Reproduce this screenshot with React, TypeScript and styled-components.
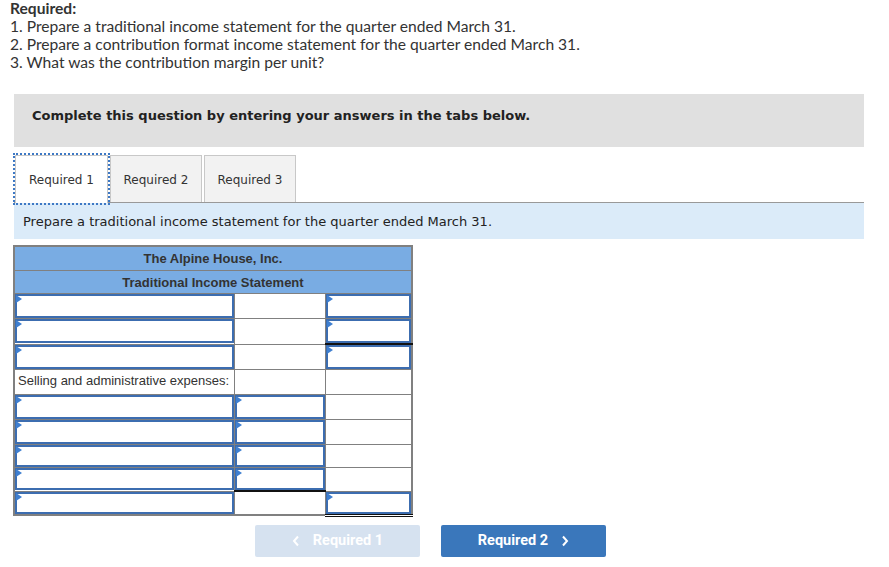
import { createGlobalStyle, styled, css } from "styled-components";

const GlobalStyle = createGlobalStyle`
  body {
    margin: 0;
    background: #fff;
    color: #333;
  }
`;

const Page = styled.div`
  padding: 0 25px 0 10px;
  width: 889px;
  box-sizing: border-box;
`;

const Question = styled.div`
  margin-top: -1px;
  font-family: "Lato", "Liberation Sans", sans-serif;
  font-size: 15.6px;
  line-height: 18px;
  color: #333;
`;

const Title = styled.div`
  font-weight: 700;
`;

const Banner = styled.div`
  margin: 23px 0 0 4px;
  height: 53px;
  box-sizing: border-box;
  background: #e0e0e0;
  padding: 14px 0 0 18px;
  font-family: "DejaVu Sans", Verdana, sans-serif;
  font-size: 13px;
  line-height: 16px;
  font-weight: 700;
  color: #222;
`;

const TabBar = styled.div`
  margin: 7px 0 0 4px;
  display: flex;
  align-items: flex-end;
  gap: 2px;
  border-bottom: 1px solid #999;
  height: 48px;
`;

const Tab = styled.div<{ $active?: boolean }>`
  height: 47px;
  width: 92px;
  box-sizing: border-box;
  display: flex;
  align-items: center;
  justify-content: center;
  padding-top: 1px;
  font-family: "DejaVu Sans", Verdana, sans-serif;
  font-size: 12px;
  color: #333;
  border: 1px solid #c8c8c8;
  border-bottom: none;
  background: #f2f2f2;
  ${(p) =>
    p.$active &&
    css`
      background: #fff;
      height: 48px;
      width: 93px;
      margin-bottom: -1px;
      margin-left: 1px;
      padding-top: 0;
      outline: 2px dotted #3d78c4;
      outline-offset: 0;
    `}
`;

const Instruction = styled.div`
  margin-left: 4px;
  height: 36px;
  background: #dbebf9;
  display: flex;
  align-items: center;
  padding-left: 9px;
  font-family: "DejaVu Sans", Verdana, sans-serif;
  font-size: 13px;
  color: #222;
`;

const Table = styled.table`
  margin: 6px 0 0 3px;
  border-collapse: collapse;
  width: 400px;
  font-family: "Liberation Sans", Arial, sans-serif;
  font-size: 13px;
  color: #333;
  border: 2px solid #808080;
`;

const HeadCell = styled.th<{ $h: number }>`
  background: #79ace3;
  border: 1px solid #808080;
  height: ${(p) => p.$h}px;
  padding: 0;
  font-weight: 700;
  font-size: 13px;
  color: #333;
  text-align: center;
`;

const Cell = styled.td<{ $w?: number; $under?: "single" | "double" }>`
  border: 1px solid #808080;
  padding: 0;
  width: ${(p) => (p.$w ? `${p.$w}px` : "auto")};
  vertical-align: top;
  ${(p) =>
    p.$under === "single" &&
    css`
      border-bottom: 2px solid #111;
    `}
  ${(p) =>
    p.$under === "double" &&
    css`
      border-bottom: 3px double #111;
    `}
`;

const Label = styled.div<{ $h: number }>`
  height: ${(p) => p.$h}px;
  padding: 3px 3px 0;
  box-sizing: border-box;
  white-space: nowrap;
`;

const Blank = styled.div<{ $h: number }>`
  height: ${(p) => p.$h}px;
`;

const Entry = styled.div<{ $h: number }>`
  position: relative;
  height: ${(p) => p.$h}px;
  box-sizing: border-box;
  border: 2px solid #3c6db0;
  background: #fff;
  &::before {
    content: "";
    position: absolute;
    left: -1px;
    top: -1px;
    border-left: 6px solid #3f7fd0;
    border-top: 4px solid transparent;
    border-bottom: 4px solid transparent;
  }
`;

const Nav = styled.div`
  display: flex;
  gap: 21px;
  margin: 8px 0 0 245px;
`;

const NavButton = styled.button<{ $disabled?: boolean }>`
  width: 165px;
  height: 32px;
  border: none;
  border-radius: 2px;
  background: ${(p) => (p.$disabled ? "#d6e2f0" : "#3a77bb")};
  color: #fff;
  font-family: "Roboto", "Liberation Sans", sans-serif;
  font-weight: 700;
  font-size: 14.5px;
  display: flex;
  align-items: center;
  justify-content: center;
  gap: 13px;
  cursor: pointer;
`;

const Chevron = ({ dir }: { dir: "left" | "right" }) => (
  <svg width="8" height="12" viewBox="0 0 8 12">
    <path
      d={dir === "left" ? "M6 1.5 L2 6 L6 10.5" : "M2 1.5 L6 6 L2 10.5"}
      fill="none"
      stroke="#fff"
      strokeWidth="2"
    />
  </svg>
);

type Row = {
  c1: "entry" | string;
  c2: boolean;
  c3: boolean;
  h: number;
  u2?: "single" | "double";
  u3?: "single" | "double";
};

const rows: Row[] = [
  { c1: "entry", c2: false, c3: true, h: 24 },
  { c1: "entry", c2: false, c3: true, h: 24, u3: "single" },
  { c1: "entry", c2: false, c3: true, h: 24 },
  { c1: "Selling and administrative expenses:", c2: false, c3: false, h: 24 },
  { c1: "entry", c2: true, c3: false, h: 24 },
  { c1: "entry", c2: true, c3: false, h: 24 },
  { c1: "entry", c2: true, c3: false, h: 22 },
  { c1: "entry", c2: true, c3: false, h: 22, u2: "single" },
  { c1: "entry", c2: false, c3: true, h: 22, u3: "double" },
];

export default function App() {
  return (
    <>
      <GlobalStyle />
      <Page>
        <Question>
          <Title>Required:</Title>
          <div>1. Prepare a traditional income statement for the quarter ended March 31.</div>
          <div>2. Prepare a contribution format income statement for the quarter ended March 31.</div>
          <div>3. What was the contribution margin per unit?</div>
        </Question>

        <Banner>Complete this question by entering your answers in the tabs below.</Banner>

        <TabBar>
          <Tab $active>Required 1</Tab>
          <Tab>Required 2</Tab>
          <Tab>Required 3</Tab>
        </TabBar>
        <Instruction>
          Prepare a traditional income statement for the quarter ended March 31.
        </Instruction>

        <Table>
          <thead>
            <tr>
              <HeadCell colSpan={3} $h={23}>
                The Alpine House, Inc.
              </HeadCell>
            </tr>
            <tr>
              <HeadCell colSpan={3} $h={22}>
                Traditional Income Statement
              </HeadCell>
            </tr>
          </thead>
          <tbody>
            {rows.map((r, i) => (
              <tr key={i}>
                <Cell $w={219}>
                  {r.c1 === "entry" ? (
                    <Entry $h={r.h} />
                  ) : (
                    <Label $h={r.h}>{r.c1}</Label>
                  )}
                </Cell>
                <Cell $w={90} $under={r.u2}>
                  {r.c2 ? <Entry $h={r.h} /> : <Blank $h={r.h} />}
                </Cell>
                <Cell $under={r.u3}>
                  {r.c3 ? <Entry $h={r.h} /> : <Blank $h={r.h} />}
                </Cell>
              </tr>
            ))}
          </tbody>
        </Table>

        <Nav>
          <NavButton $disabled>
            <Chevron dir="left" />
            Required 1
          </NavButton>
          <NavButton>
            Required 2
            <Chevron dir="right" />
          </NavButton>
        </Nav>
      </Page>
    </>
  );
}
